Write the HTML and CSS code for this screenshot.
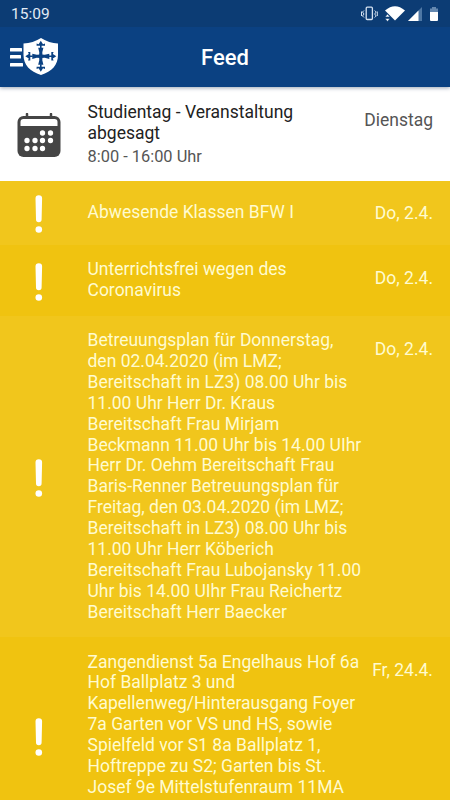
FILE: index.html
```html
<!DOCTYPE html>
<html lang="de">
<head>
    <meta charset="UTF-8">
    <meta name="viewport" content="width=device-width, initial-scale=1.0">
    <title>Feed</title>
    <link rel="stylesheet" href="styles.css">
</head>
<body>
    <header class="header">
        <div class="status-bar">
            <span class="clock">15:09</span>
            <svg class="status-icons" width="82" height="20" viewBox="0 0 82 20">
                <g fill="none" stroke="#d5e2f1" stroke-width="1.3">
                    <rect x="5.200" y="3.200" width="6.200" height="12.300" rx="1"/>
                    <path stroke-width="1" d="M3 6.500L1.500 8l1.500 2-1.500 2L3 13.500M.5 7.500v4.500M13.700 6.500l1.500 1.500-1.500 2 1.500 2-1.500 1.500M16.300 7.500v4.500"/>
                </g>
                <path fill="#fff" d="M24 6.500Q34-2 44 6.500L34 16.500z"/>
                <path fill="#fff" stroke="#0c3c74" stroke-width=".6" d="M24 13h5l-2.500-3zM24 14.500h5l-2.500 3z"/>
                <path fill="#4e77a4" d="M61 3v14H47z"/>
                <path fill="#fff" d="M57.500 6.500V17H47z"/>
                <path fill="#6488b0" d="M71 3h4v1.500h2V8h-8V4.500h2z"/>
                <path fill="#fff" d="M69 8h8v8q0 1-1 1h-6q-1 0-1-1z"/>
            </svg>
        </div>
        <div class="toolbar">
            <svg class="menu" width="50" height="40" viewBox="0 0 50 40">
                <g fill="#fff">
                    <rect x="0" y="11" width="12" height="3.500" rx=".5"/>
                    <rect x="0" y="18" width="11" height="3.500" rx=".5"/>
                    <rect x="0" y="26" width="13" height="3.500" rx=".5"/>
                    <path d="M31 1Q23 6 13.500 6.500V18C13.500 28 20 34.500 31 38 42 34.500 48 28 48 18V6.500Q39 6 31 1z"/>
                </g>
                <defs>
                    <g id="arm">
                        <path d="M-1.700 0L-1.500-4-2.600-8.500H2.600L1.500-4 1.700 0z"/>
                        <path d="M-.8-8v-2.500h-3.400v-2.300l2 .8L0-15.500 2.200-12l2-.8v2.300H.8V-8z"/>
                    </g>
                </defs>
                <g fill="#0b4182" transform="translate(30.800 19.300)">
                    <use href="#arm"/>
                    <use href="#arm" transform="rotate(90)"/>
                    <use href="#arm" transform="rotate(180)"/>
                    <use href="#arm" transform="rotate(270)"/>
                </g>
            </svg>
            <h1 class="title">Feed</h1>
        </div>
    </header>
    <main class="feed">
        <div class="item event">
            <div class="icon">
                <svg width="44" height="44" viewBox="0 0 44 44">
                    <path d="M10 1v6M34 1v6" stroke="#454545" stroke-width="2.500" stroke-linecap="round"/>
                    <rect x="0.500" y="3" width="43" height="41" rx="6" fill="#454545"/>
                    <path d="M3.500 13V9q0-3 3-3h31q3 0 3 3v4z" fill="#fff"/>
                    <path d="M25.500 20h.01M33.500 20h.01M10 27.500h.01M18 27.500h.01M25.500 27.500h.01M33.500 27.500h.01M10 35.500h.01M18 35.500h.01M25.500 35.500h.01" stroke="#fff" stroke-width="5.300" stroke-linecap="round"/>
                </svg>
            </div>
            <div class="text">
                <div>Studientag - Veranstaltung<br>abgesagt</div>
                <div class="time">8:00 - 16:00 Uhr</div>
            </div>
            <div class="date">Dienstag</div>
        </div>
        <div class="item notice">
            <div class="icon"><svg class="mark" width="8" height="38" viewBox="0 0 8 38"><path d="M.5 3.500a3.300 3.300 0 0 1 6.600 0L6.600 24.500a2.800 2.800 0 0 1-5.600 0z"/><circle cx="3.800" cy="34.500" r="3.300"/></svg></div>
            <div class="text">Abwesende Klassen BFW I</div>
            <div class="date">Do, 2.4.</div>
        </div>
        <div class="item notice dark">
            <div class="icon"><svg class="mark" width="8" height="38" viewBox="0 0 8 38"><path d="M.5 3.500a3.300 3.300 0 0 1 6.600 0L6.600 24.500a2.800 2.800 0 0 1-5.600 0z"/><circle cx="3.800" cy="34.500" r="3.300"/></svg></div>
            <div class="text">Unterrichtsfrei wegen des<br>Coronavirus</div>
            <div class="date">Do, 2.4.</div>
        </div>
        <div class="item notice">
            <div class="icon"><svg class="mark" width="8" height="38" viewBox="0 0 8 38"><path d="M.5 3.500a3.300 3.300 0 0 1 6.600 0L6.600 24.500a2.800 2.800 0 0 1-5.600 0z"/><circle cx="3.800" cy="34.500" r="3.300"/></svg></div>
            <div class="text">Betreuungsplan für Donnerstag,<br>den 02.04.2020 (im LMZ;<br>Bereitschaft in LZ3) 08.00 Uhr bis<br>11.00 Uhr Herr Dr. Kraus<br>Bereitschaft Frau Mirjam<br>Beckmann 11.00 Uhr bis 14.00 UIhr<br>Herr Dr. Oehm Bereitschaft Frau<br>Baris-Renner Betreuungsplan für<br>Freitag, den 03.04.2020 (im LMZ;<br>Bereitschaft in LZ3) 08.00 Uhr bis<br>11.00 Uhr Herr Köberich<br>Bereitschaft Frau Lubojansky 11.00<br>Uhr bis 14.00 UIhr Frau Reichertz<br>Bereitschaft Herr Baecker</div>
            <div class="date">Do, 2.4.</div>
        </div>
        <div class="item notice dark">
            <div class="icon"><svg class="mark" width="8" height="38" viewBox="0 0 8 38"><path d="M.5 3.500a3.300 3.300 0 0 1 6.600 0L6.600 24.500a2.800 2.800 0 0 1-5.600 0z"/><circle cx="3.800" cy="34.500" r="3.300"/></svg></div>
            <div class="text">Zangendienst 5a Engelhaus Hof 6a<br>Hof Ballplatz 3 und<br>Kapellenweg/Hinterausgang Foyer<br>7a Garten vor VS und HS, sowie<br>Spielfeld vor S1 8a Ballplatz 1,<br>Hoftreppe zu S2; Garten bis St.<br>Josef 9e Mittelstufenraum 11MA<br>vor der Küche</div>
            <div class="date">Fr, 24.4.</div>
        </div>
    </main>
</body>
</html>
```

FILE: styles.css
```css
body {
    margin: 0;
    font-family: Roboto, "Liberation Sans", sans-serif;
    background: #fff;
}
.header {
    position: relative;
    height: 87px;
    background: #0b4182;
    color: white;
    box-shadow: 0 1px 4px rgba(0, 30, 70, 0.4);
}
.status-bar {
    display: flex;
    justify-content: space-between;
    align-items: center;
    box-sizing: border-box;
    height: 27px;
    padding: 0 7px 0 11px;
    background: #0c3c74;
}
.clock {
    font-size: 15.5px;
    color: #e2ebf5;
}
.status-icons {
    display: block;
}
.toolbar {
    display: grid;
    grid-template-columns: 60px 1fr 60px;
    align-items: center;
    height: 60px;
}
.menu {
    margin-left: 10px;
}
.title {
    margin: 0;
    text-align: center;
    font-size: 22px;
    font-weight: 500;
}
.feed {
    height: 713px;
    overflow: hidden;
}
.item {
    display: flex;
    align-items: center;
    box-sizing: border-box;
    padding: 14px 17px 15px 0;
    font-size: 17.5px;
    line-height: 20.88px;
}
.event {
    height: 93.5px;
    padding-bottom: 12px;
    color: #222;
}
.notice {
    min-height: 64.5px;
    padding-top: 14.2px;
    background: #f1c61c;
    color: #fffbcf;
}
.dark {
    background: #f0c310;
}
.icon {
    display: flex;
    justify-content: center;
    flex: 0 0 77px;
    margin: -5px 10.5px -5px 0;
    padding-top: 3px;
}
.event .icon {
    padding-top: 0;
}
.mark {
    fill: #fff;
}
.text {
    width: 276px;
    white-space: nowrap;
}
.time {
    margin-top: 3px;
    font-size: 16.4px;
    color: #555;
}
.date {
    flex: 1;
    align-self: flex-start;
    padding-top: 8.5px;
    text-align: right;
    white-space: nowrap;
}
.event .date {
    padding-top: 9px;
    color: #555;
}
```
